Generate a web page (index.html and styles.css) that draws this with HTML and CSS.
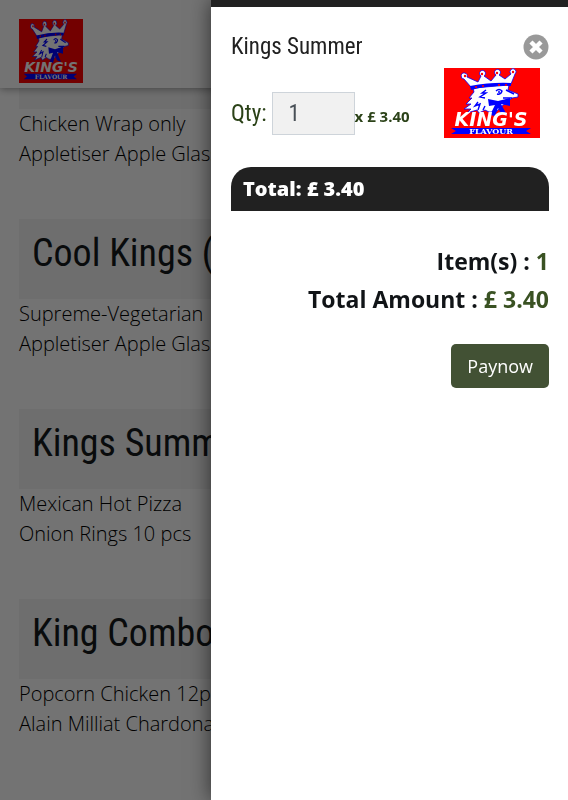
FILE: index.html
```
<!DOCTYPE html>
<html lang="en">
<head>
  <meta charset="utf-8">
  <meta name="viewport" content="width=device-width, initial-scale=1">
  <title>King's Flavour</title>
  <link rel="stylesheet" href="styles.css">
</head>
<body>
  <svg class="sprite" aria-hidden="true">
    <symbol id="bird" viewBox="0 0 96 70" preserveAspectRatio="none">
      <g class="logo-white logo-outline">
        <path d="M29 20 L30 24 L25 30 L28 30 L22 36 L27 36 L20 41 L27 41 L23 45 L33 42 L35 45 L41 42 L45 44 L52 44 L58 38 L66 32 L68 30 L74 29 L74 26 L64 22 L65 17 Z"/>
        <path d="M27 19 L20 11 A3 3 0 1 1 23 9 L34 14 L37 8 A3 3 0 1 1 40 8 L47 13 L52 7 A3 3 0 1 1 55 7 L61 11 L67 6 A3 3 0 1 1 71 6 L67 16 Q48 15 27 19 Z"/>
      </g>
      <path class="logo-blue" d="M26 18 Q48 14 67 15 L67 18 Q48 17 27 22 Z"/>
      <path class="logo-blue" d="M44 31 L54 33 L66 30 L66 38 L57 36 L63 47 L57 45 L54 40 L51 48 L46 47 L51 37 L45 38 Z"/>
      <path class="logo-lines" d="M42 22 L38 25 L42 25 L36 29 L41 30 M34 34 L31 38 L36 36 L34 42 M41 38 L39 42 M52 23 Q55 20 58 23 Q57 27 53 26 M59 30 L68 30 M62 22 L70 26"/>
      <circle class="logo-blue" cx="55" cy="24" r="1"/>
      <g class="logo-red">
        <circle cx="21" cy="8" r="1.2"/><circle cx="38" cy="6" r="1.2"/><circle cx="53" cy="5" r="1.2"/><circle cx="69" cy="4" r="1.2"/>
        <circle cx="32" cy="19" r="1.1"/><circle cx="39" cy="18" r="1.1"/><circle cx="55" cy="17" r="1.1"/><circle cx="62" cy="17" r="1.1"/>
      </g>
      <path class="logo-blue" d="M7 60 H87 L82 63 L87 66 H7 L12 63 Z"/>
    </symbol>
  </svg>

  <header class="header">
    <a class="brand" href="#" aria-label="King's Flavour">
      <svg class="logo" viewBox="0 0 64 64">
        <rect class="logo-red" width="64" height="64"/>
        <use href="#bird" width="64" height="64"/>
        <text class="logo-king" x="32" y="53" font-size="14">KING'S</text>
        <text class="logo-flavour" x="32" y="60" font-size="6">FLAVOUR</text>
      </svg>
    </a>
  </header>

  <main class="menu">
    <section class="meal">
      <h2 class="meal-title">Wrap Meal</h2>
      <p class="meal-items">Chicken Wrap only<br>Appletiser Apple Glass</p>
    </section>
    <section class="meal">
      <h2 class="meal-title">Cool Kings (V)</h2>
      <p class="meal-items">Supreme-Vegetarian<br>Appletiser Apple Glass</p>
    </section>
    <section class="meal">
      <h2 class="meal-title">Kings Summer</h2>
      <p class="meal-items">Mexican Hot Pizza<br>Onion Rings 10 pcs</p>
    </section>
    <section class="meal">
      <h2 class="meal-title">King Combo</h2>
      <p class="meal-items">Popcorn Chicken 12pcs<br>Alain Milliat Chardonay</p>
    </section>
  </main>

  <div class="backdrop"></div>

  <aside class="cart" aria-label="Cart">
    <div class="cart-body">
      <div class="item-head">
        <h3 class="item-name">Kings Summer</h3>
        <button class="remove" type="button" aria-label="Remove">
          <svg viewBox="0 0 26 26" width="26" height="26">
            <circle cx="13" cy="13" r="12.5" fill="#999"/>
            <path d="M9.5 9.5 L16.5 16.5 M16.5 9.5 L9.5 16.5" stroke="#fff" stroke-width="4.4" stroke-linecap="square"/>
          </svg>
        </button>
      </div>
      <div class="item-row">
        <div class="item-qty">
          <label class="qty-label" for="qty">Qty:</label>
          <input class="qty" id="qty" type="text" inputmode="numeric" value="1">
          <span class="price">x £ 3.40</span>
        </div>
        <svg class="item-logo" viewBox="0 0 96 70" role="img" aria-label="King's Flavour">
          <rect class="logo-red" width="96" height="70"/>
          <use href="#bird" width="96" height="70"/>
          <text class="logo-king" x="47" y="58" font-size="19">KING'S</text>
          <text class="logo-flavour" x="47" y="66" font-size="8">FLAVOUR</text>
        </svg>
      </div>
      <div class="item-total">Total: £ 3.40</div>
      <div class="summary">
        <p>Item(s) : <span class="amount">1</span></p>
        <p>Total Amount : <span class="amount">£ 3.40</span></p>
      </div>
      <button class="pay" type="button">Paynow</button>
    </div>
  </aside>
</body>
</html>
```
FILE: styles.css
```
* {
  box-sizing: border-box;
}

body {
  margin: 0;
  height: 100vh;
  overflow: hidden;
  background: #fff;
  color: #14191c;
  font-family: "Open Sans", sans-serif;
}

h2, h3, p {
  margin: 0;
}

.sprite {
  position: absolute;
  width: 0;
  height: 0;
}

.header {
  position: fixed;
  top: 0;
  left: 0;
  right: 0;
  padding: 19px 19px 5px;
  background: #fff;
  box-shadow: 0 1px 8px rgba(0, 0, 0, 0.4);
}

.brand,
.logo {
  display: block;
}

.logo {
  width: 64px;
  height: 64px;
}

.logo-red {
  fill: #f00;
}

.logo-white {
  fill: #fff;
}

.logo-blue {
  fill: #00f;
}

.logo-outline {
  stroke: #00f;
  stroke-width: 0.8;
}

.logo-lines {
  fill: none;
  stroke: #00f;
  stroke-width: 1.4;
}

.logo-king,
.logo-flavour {
  fill: #fff;
  font-weight: bold;
  text-anchor: middle;
}

.logo-king {
  font-family: "DejaVu Sans", sans-serif;
  font-style: italic;
}

.logo-flavour {
  font-family: "DejaVu Serif", serif;
}

.menu {
  padding: 29px 19px 0;
}

.meal {
  margin-bottom: 50px;
}

.meal-title {
  height: 80px;
  padding: 8px 13px;
  background: #f3f3f3;
  font: 400 38px/52px "Roboto Condensed", Roboto, sans-serif;
  white-space: nowrap;
}

.meal-items {
  font: 350 20px/30px "Open Sans", sans-serif;
  color: #000;
  white-space: nowrap;
}

.backdrop {
  position: fixed;
  inset: 0;
  background: rgba(0, 0, 0, 0.55);
}

.cart {
  position: fixed;
  top: 0;
  right: 0;
  bottom: 0;
  width: 357px;
  max-width: 90%;
  background: #fff;
  border-top: 7px solid #212121;
  box-shadow: 0 0 20px rgba(0, 0, 0, 0.6);
}

.cart-body {
  display: flex;
  flex-direction: column;
  padding: 27px 19px 0 20px;
}

.item-head,
.item-row,
.item-qty {
  display: flex;
  align-items: center;
}

.item-head,
.item-row {
  justify-content: space-between;
}

.item-name {
  font: 400 23px/26px "Roboto Condensed", Roboto, sans-serif;
  color: #212121;
}

.remove {
  display: block;
  height: 26px;
  padding: 0;
  border: 0;
  background: none;
  cursor: pointer;
}

.item-row {
  margin-top: 8px;
  padding-right: 9px;
  align-items: flex-start;
}

.item-qty {
  margin-top: 24px;
}

.qty-label {
  margin-right: 5px;
  color: #2b4218;
  font: 400 23px/28px "Roboto Condensed", Roboto, sans-serif;
}

.qty {
  width: 83px;
  height: 43px;
  padding: 0 16px;
  border: 1px solid #ced4da;
  background: #f1f1f1;
  color: #495057;
  font: 400 23px "Roboto Condensed", Roboto, sans-serif;
}

.price {
  padding-top: 4px;
  color: #2b4218;
  font-size: 15px;
  font-weight: 700;
}

.item-logo {
  width: 96px;
  height: 70px;
}

.item-total {
  margin-top: 29px;
  padding: 0 12px;
  border-radius: 20px 20px 0 0;
  background: #212121;
  color: #fff;
  font-size: 20px;
  font-weight: 800;
  line-height: 44px;
}

.summary {
  margin-top: 31px;
  color: #111417;
  font-size: 23px;
  font-weight: 700;
  line-height: 38px;
  text-align: right;
}

.amount {
  color: #3a5223;
}

.pay {
  align-self: flex-end;
  margin-top: 26px;
  padding: 0 16px;
  border: 0;
  border-radius: 5px;
  background: #425134;
  color: #fff;
  font: 18px/44px "Open Sans", sans-serif;
  cursor: pointer;
}
```
